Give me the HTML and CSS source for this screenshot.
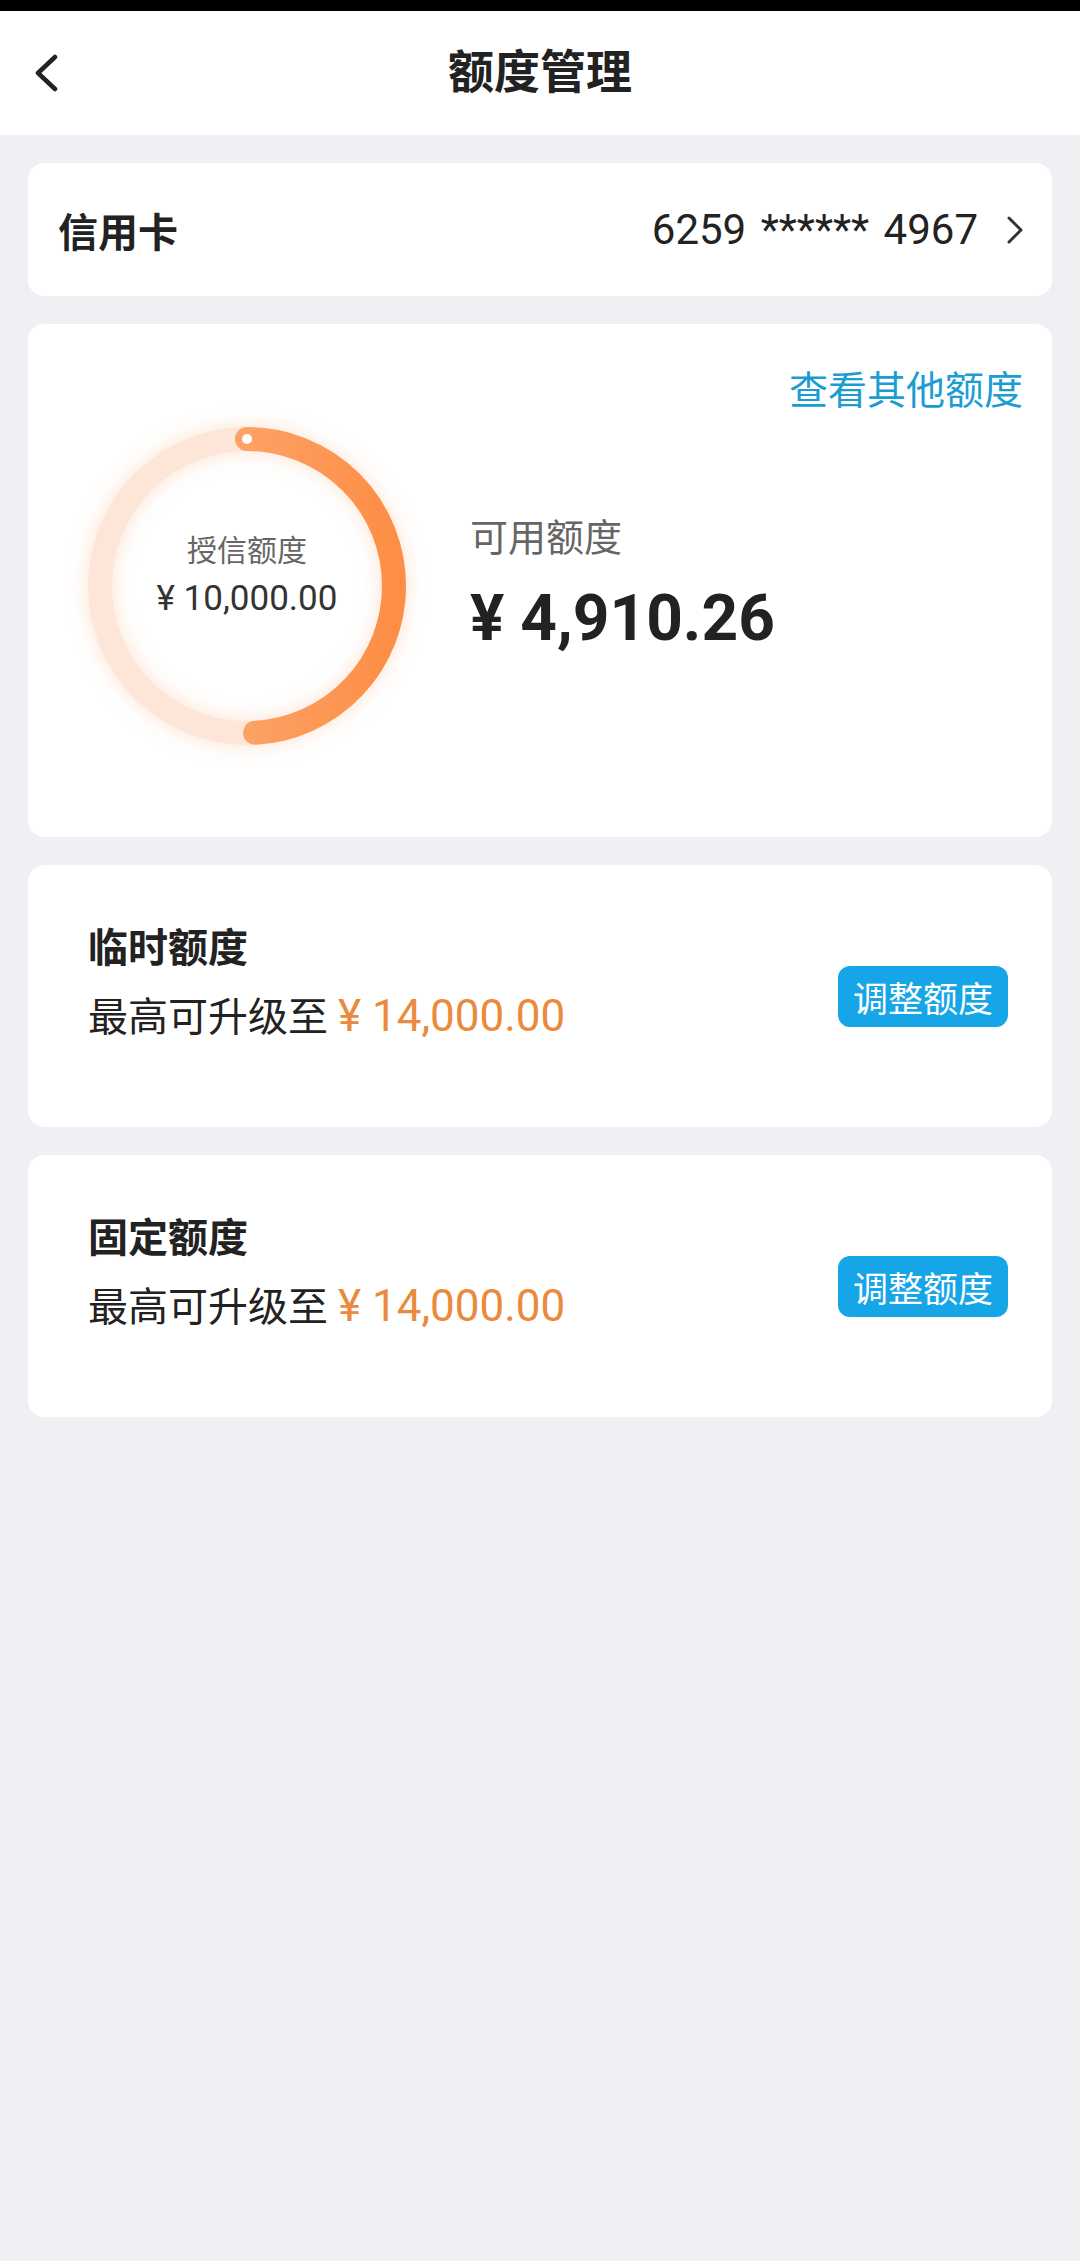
FILE: index.html
```html
<!DOCTYPE html>
<html>
  <head>
    <meta charset="utf-8" />
    <title>额度管理</title>
    <link rel="stylesheet" href="styles.css">
  </head>
  <body>
    <div class="status-bar"></div>
    <header class="nav">
      <a href="#" class="nav-back">
        <svg width="26" height="38" viewBox="0 0 26 38">
          <polyline points="22,3 5,19 22,35" fill="none" stroke="#222" stroke-width="4.5" stroke-linecap="round" stroke-linejoin="round" />
        </svg>
      </a>
      <h1 class="nav-title">额度管理</h1>
    </header>

    <main class="content">
      <section class="card card-account">
        <span class="account-label">信用卡</span>
        <span class="account-number">6259 ****** 4967</span>
        <svg class="account-arrow" width="18" height="30" viewBox="0 0 18 30">
          <polyline points="3,3 15,15 3,27" fill="none" stroke="#333" stroke-width="3" stroke-linecap="round" stroke-linejoin="round" />
        </svg>
      </section>

      <section class="card card-limit">
        <div class="limit-top">
          <a href="#" class="limit-link">查看其他额度</a>
        </div>
        <div class="limit-body">
          <div class="ring">
            <svg width="318" height="318" viewBox="0 0 318 318">
              <defs>
                <linearGradient id="arc" x1="0" y1="0" x2="0" y2="1">
                  <stop offset="0" stop-color="#fdb485" />
                  <stop offset="1" stop-color="#fd8e45" />
                </linearGradient>
              </defs>
              <circle cx="159" cy="159" r="147" fill="none" stroke="#fde6d8" stroke-width="24" />
              <circle cx="159" cy="159" r="147" fill="none" stroke="url(#arc)" stroke-width="24"
                stroke-linecap="round" stroke-dasharray="453.5 923.6" transform="rotate(-90 159 159)" />
              <circle cx="159" cy="12" r="5" fill="#fff" />
            </svg>
            <div class="ring-text">
              <span class="ring-label">授信额度</span>
              <span class="ring-amount">¥ 10,000.00</span>
            </div>
          </div>
          <div class="available">
            <span class="available-label">可用额度</span>
            <span class="available-amount">¥ 4,910.26</span>
          </div>
        </div>
      </section>

      <section class="card card-adjust">
        <div class="adjust-info">
          <h2 class="adjust-title">临时额度</h2>
          <p class="adjust-desc">最高可升级至 <span class="adjust-amount">¥ 14,000.00</span></p>
        </div>
        <a href="#" class="adjust-btn">调整额度</a>
      </section>

      <section class="card card-adjust">
        <div class="adjust-info">
          <h2 class="adjust-title">固定额度</h2>
          <p class="adjust-desc">最高可升级至 <span class="adjust-amount">¥ 14,000.00</span></p>
        </div>
        <a href="#" class="adjust-btn">调整额度</a>
      </section>
    </main>
  </body>
</html>
```

FILE: styles.css
```css
/* || Initial styles */

html {
  font-family: Roboto, "Noto Sans CJK SC", sans-serif;
  color: #222;
}

* {
  box-sizing: border-box;
}

body {
  margin: 0;
  min-height: 2261px;
  background-color: #efeff4;
}

a {
  text-decoration: none;
  color: inherit;
}

/* || Top bar */

.status-bar {
  height: 11px;
  background-color: #000;
}

.nav {
  height: 124px;
  display: grid;
  grid-template-columns: 1fr auto 1fr;
  align-items: center;
  background-color: #fff;
}

.nav-back {
  display: flex;
  padding-left: 33px;
}

.nav-title {
  margin: 0;
  font-size: 46px;
  font-weight: 700;
  line-height: 1;
  padding-bottom: 2px;
}

/* || Cards */

.content {
  display: flex;
  flex-direction: column;
  gap: 28px;
  padding: 28px 28px 0;
}

.card {
  background-color: #fff;
  border-radius: 16px;
}

.card-account {
  height: 133px;
  display: flex;
  align-items: center;
  padding: 0 28px 0 30px;
}

.account-label {
  font-size: 40px;
  font-weight: 700;
  flex: 1;
}

.account-number {
  font-size: 42px;
  word-spacing: 4px;
  margin-right: 28px;
  color: #222;
}

.account-arrow {
  display: block;
}

/* || Limit card */

.card-limit {
  padding: 44px 29px 92px 60px;
}

.limit-top {
  display: flex;
  justify-content: flex-end;
}

.limit-link {
  font-size: 39px;
  line-height: 46px;
  color: #1b9dd2;
}

.limit-body {
  display: flex;
  align-items: center;
  gap: 64px;
  margin-top: 13px;
}

.ring {
  display: grid;
  width: 318px;
  height: 318px;
}

.ring svg,
.ring-text {
  grid-area: 1 / 1;
}

.ring svg {
  filter: drop-shadow(0 0 10px rgba(253, 160, 100, 0.3));
}

.ring-text {
  display: flex;
  flex-direction: column;
  align-items: center;
  justify-content: center;
  gap: 6px;
  padding-bottom: 20px;
}

.ring-label {
  font-size: 30px;
  line-height: 40px;
  color: #666;
}

.ring-amount {
  font-size: 35px;
  line-height: 44px;
  color: #333;
}

.available {
  display: flex;
  flex-direction: column;
  gap: 19px;
}

.available-label {
  font-size: 38px;
  line-height: 46px;
  color: #666;
}

.available-amount {
  font-size: 64px;
  line-height: 77px;
  font-weight: 700;
}

/* || Adjust cards */

.card-adjust {
  height: 262px;
  display: flex;
  align-items: center;
  padding: 0 44px 0 60px;
}

.adjust-info {
  flex: 1;
  padding-bottom: 26px;
}

.adjust-title {
  margin: 0;
  font-size: 40px;
  line-height: 48px;
  font-weight: 700;
}

.adjust-desc {
  margin: 19px 0 0;
  font-size: 40px;
  line-height: 48px;
  color: #222;
}

.adjust-amount {
  font-size: 44px;
  color: #e98a3c;
}

.adjust-btn {
  width: 170px;
  height: 61px;
  display: flex;
  align-items: center;
  justify-content: center;
  border-radius: 12px;
  background-color: #16a5e7;
  color: #fff;
  font-size: 35px;
}
```
